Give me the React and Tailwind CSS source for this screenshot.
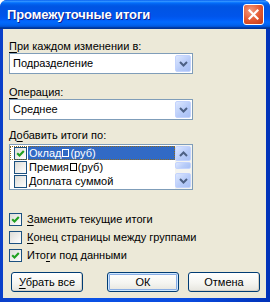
import React from 'react'

function Chevron({ up = false }) {
  return (
    <svg width="9" height="6" viewBox="0 0 9 6" className={up ? 'rotate-180' : ''}>
      <path d="M1 1 L4.5 4.5 L8 1" fill="none" stroke="#4D6185" strokeWidth="2" />
    </svg>
  )
}

function ArrowButton({ up = false, className = '' }) {
  return (
    <div
      className={
        'flex items-center justify-center rounded-[2px] border border-[#C3D3FD] bg-[linear-gradient(135deg,#DCE7FF,#B8CCF9_55%,#A8C0F5)] ' +
        className
      }
    >
      <Chevron up={up} />
    </div>
  )
}

function Combo({ value }) {
  return (
    <div className="flex h-[21px] w-[184px] items-center border border-[#7F9DB9] bg-white">
      <span className="flex-1 pl-[3px] leading-[13px]">{value}</span>
      <ArrowButton className="mr-[1px] h-[17px] w-[16px]" />
    </div>
  )
}

function Check({ checked }) {
  return (
    <span className="flex h-[13px] w-[13px] shrink-0 items-center justify-center border border-[#1C5180] bg-[linear-gradient(135deg,#DCDCD7,#FFFFFF)]">
      {checked && (
        <svg width="9" height="9" viewBox="0 0 9 9">
          <path d="M1.2 4.2 L3.5 6.5 L7.8 2" fill="none" stroke="#21A121" strokeWidth="2.1" />
        </svg>
      )}
    </span>
  )
}

function Box() {
  return <span className="mx-[1px] inline-block h-[8px] w-[7px] border border-current align-[-1px]" />
}

function ListRow({ checked, selected, children }) {
  return (
    <div
      className={
        'flex h-[14px] items-center ' +
        (selected ? 'outline-1 outline-dotted outline-[#8a6a20] -outline-offset-1' : '')
      }
    >
      <span className="ml-[4px] mr-[1px]">
        <Check checked={checked} />
      </span>
      <span
        className={
          'flex h-[14px] flex-1 items-center pl-[1px] leading-[13px] ' +
          (selected ? 'bg-[#316AC5] text-white' : '')
        }
      >
        {children}
      </span>
    </div>
  )
}

function CheckRow({ checked, children }) {
  return (
    <div className="flex h-[13px] items-center gap-[5px]">
      <Check checked={checked} />
      <span className="leading-[13px]">{children}</span>
    </div>
  )
}

function XpButton({ children, primary = false, className = '' }) {
  return (
    <button
      className={
        'flex h-[20px] w-[72px] items-center justify-center rounded-[3px] border border-[#003C74] bg-[linear-gradient(180deg,#FFFFFF,#F5F5F1_55%,#E6E5DE)] leading-[13px] text-black ' +
        (primary
          ? 'shadow-[inset_0_0_0_1px_#CEE7FF,inset_0_0_0_2px_#89ADE4] '
          : 'shadow-[inset_-1px_-1px_0_#D6D0C5] ') +
        className
      }
    >
      {children}
    </button>
  )
}

export default function App() {
  return (
    <div className="flex h-[302px] w-[270px] flex-col overflow-hidden rounded-t-[7px] bg-[linear-gradient(90deg,#0A3FC9,#0A52E6_30%,#0A4BDF_70%,#0032B8)] font-['Liberation_Sans',Arial,sans-serif] text-[11px] text-black">
      {/* Title bar */}
      <div className="flex h-[29px] shrink-0 items-center bg-[linear-gradient(180deg,#0058EE_0%,#3593FF_4%,#288EFF_6%,#127DFF_8%,#036FFC_10%,#0262EE_14%,#0057E5_20%,#0054E3_24%,#0055EB_56%,#005BF5_66%,#026AFE_76%,#0062EF_86%,#0052D6_92%,#0040AB_94%,#003092_100%)] pl-[7px] pr-[6px]">
        <span className="flex-1 text-[13px] font-bold tracking-[-0.1px] text-white [text-shadow:1px_1px_#0F1F8C]">
          Промежуточные итоги
        </span>
        <div className="flex h-[21px] w-[21px] items-center justify-center rounded-[3px] border border-white bg-[radial-gradient(circle_at_35%_30%,#F29A7E,#E2562F_55%,#C13A17)]">
          <svg width="11" height="11" viewBox="0 0 11 11">
            <path d="M1.5 1.5 L9.5 9.5 M9.5 1.5 L1.5 9.5" stroke="white" strokeWidth="2.2" strokeLinecap="square" />
          </svg>
        </div>
      </div>

      {/* Body */}
      <div className="mb-[4px] ml-[3px] mr-[4px] flex flex-1 flex-col bg-[#ECE9D8] pl-[6px]">
        <div className="mt-[11px] h-[13px] leading-[13px]">
          <u className="underline-offset-2">П</u>ри каждом изменении в:
        </div>
        <Combo value="Подразделение" />

        <div className="mt-[12px] h-[13px] leading-[13px]">
          <u className="underline-offset-2">О</u>перация:
        </div>
        <Combo value="Среднее" />

        <div className="mt-[9px] h-[13px] leading-[13px]">
          Д<u className="underline-offset-2">о</u>бавить итоги по:
        </div>
        <div className="mt-[2px] flex h-[46px] w-[184px] border border-[#7F9DB9] bg-white">
          <div className="flex flex-1 flex-col pt-[1px]">
            <ListRow checked selected>
              Оклад<Box />(руб)
            </ListRow>
            <ListRow>
              Премия<Box />(руб)
            </ListRow>
            <ListRow>Доплата суммой</ListRow>
          </div>
          <div className="flex w-[17px] flex-col bg-[#F4F4F0] py-[1px] pr-[1px]">
            <ArrowButton up className="h-[15px]" />
            <ArrowButton className="mt-[1px] h-[7px] [&>svg]:hidden" />
            <div className="flex-1" />
            <ArrowButton className="h-[15px]" />
          </div>
        </div>

        <div className="mt-[23px] flex flex-col gap-[5px]">
          <CheckRow checked>
            <u className="underline-offset-2">З</u>аменить текущие итоги
          </CheckRow>
          <CheckRow>
            <u className="underline-offset-2">К</u>онец страницы между группами
          </CheckRow>
          <CheckRow checked>
            Ито<u className="underline-offset-2">г</u>и под данными
          </CheckRow>
        </div>

        <div className="mt-[10px] flex items-center">
          <XpButton className="ml-[2px]">
            <span>
              <u className="underline-offset-2">У</u>брать все
            </span>
          </XpButton>
          <XpButton primary className="ml-[24px]">
            ОК
          </XpButton>
          <XpButton className="ml-[9px]">Отмена</XpButton>
        </div>
      </div>
    </div>
  )
}
